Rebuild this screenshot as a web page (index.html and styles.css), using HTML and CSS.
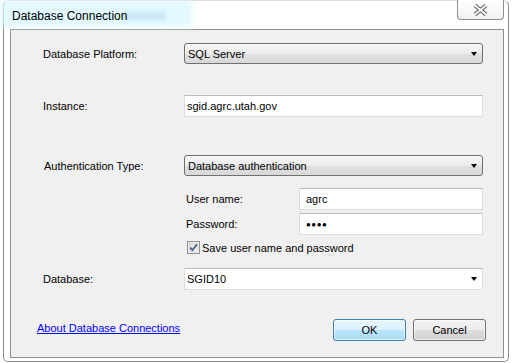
FILE: index.html
```html
<!DOCTYPE html>
<html lang="en">
<head>
  <meta charset="UTF-8" />
  <title>Database Connection</title>
  <link rel="stylesheet" href="styles.css">
</head>
<body>

<div class="window">
  <div class="titlebar">
    <span class="glow"></span>
    <span class="glow-ghost"></span>
    <span class="title">Database Connection</span>
    <button class="close" type="button" aria-label="Close">
      <svg width="15" height="12" viewBox="0 0 15 12">
        <path d="M2 1.5 L13 10.5 M13 1.5 L2 10.5" stroke="#5a5a5a" stroke-width="4" fill="none"/>
        <path d="M2 1.5 L13 10.5 M13 1.5 L2 10.5" stroke="#fff" stroke-width="2" fill="none"/>
      </svg>
    </button>
  </div>

  <div class="client">
    <div class="row platform-row">
      <span class="label">Database Platform:</span>
      <div class="combo">SQL Server<span class="arrow"></span></div>
    </div>

    <div class="row instance-row">
      <span class="label">Instance:</span>
      <div class="field">sgid.agrc.utah.gov</div>
    </div>

    <div class="row auth-row">
      <span class="label">Authentication Type:</span>
      <div class="combo">Database authentication<span class="arrow"></span></div>
    </div>

    <div class="sub-row user-row">
      <span class="sub-label">User name:</span>
      <div class="field sub-field">agrc</div>
    </div>
    <div class="sub-row pass-row">
      <span class="sub-label">Password:</span>
      <div class="field sub-field"><span class="dots">●●●●</span></div>
    </div>

    <div class="check-row">
      <svg class="check" width="13" height="13" viewBox="0 0 13 13">
        <defs>
          <linearGradient id="cb" x1="0" y1="0" x2="1" y2="1">
            <stop offset="0" stop-color="#d8d8d8"/>
            <stop offset="1" stop-color="#fbfbfb"/>
          </linearGradient>
        </defs>
        <rect x="0.5" y="0.5" width="12" height="12" fill="#fff" stroke="#8e8f8f"/>
        <rect x="2" y="2" width="9" height="9" fill="url(#cb)" stroke="#c2c2c2" stroke-width="0.6"/>
        <path d="M3.2 6.6 L5.4 9.2 L10 3.4" stroke="#4a5d8c" stroke-width="1.8" fill="none"/>
      </svg>
      <span>Save user name and password</span>
    </div>

    <div class="row db-row">
      <span class="label">Database:</span>
      <div class="combo editable">SGID10<span class="arrow"></span></div>
    </div>

    <div class="footer">
      <a href="#" class="help-link">About Database Connections</a>
      <div class="buttons">
        <button type="button" class="btn btn-ok">OK</button>
        <button type="button" class="btn">Cancel</button>
      </div>
    </div>
  </div>
</div>

</body>
</html>
```

FILE: styles.css
```css
* { box-sizing: border-box; }
body {
  margin: 0;
  background: #fff;
  font-family: "Liberation Sans", Arial, sans-serif;
  font-size: 11px;
  color: #000;
}

.window {
  margin-left: 3px;
  width: 506px;
  height: 362px;
  border: 1px solid #8c8c8c;
  border-top-color: #dcdcdc;
  border-radius: 6px 6px 5px 5px;
  background: #fff;
}

.titlebar {
  position: relative;
  height: 28px;
  display: flex;
  align-items: center;
  padding-left: 8px;
}
.glow {
  position: absolute;
  left: -4px;
  top: -1px;
  width: 192px;
  height: 27px;
  background: rgba(220, 248, 255, 0.85);
  filter: blur(3px);
}
.glow-ghost {
  position: absolute;
  left: 118px;
  top: 11px;
  width: 44px;
  height: 8px;
  background: rgba(140, 180, 210, 0.25);
  filter: blur(2px);
}
.title {
  position: relative;
  font-size: 12px;
  margin-top: 2px;
  color: #000;
}
.close {
  position: absolute;
  right: 4px;
  top: -1px;
  width: 47px;
  height: 20px;
  border: 1px solid #8f8f8f;
  border-top: none;
  border-radius: 0 0 4px 4px;
  background: linear-gradient(#fff, #f1f1f1);
  padding: 0;
  display: flex;
  align-items: center;
  justify-content: center;
}

.client {
  margin: 0 4px 0 6px;
  height: 329px;
  border: 1px solid #8e8f8f;
  background: #f0f0f0;
  padding: 13px 20px 0 32px;
  display: flex;
  flex-direction: column;
}

.row { display: flex; align-items: center; }
.row .label { width: 141px; }
.instance-row { margin-top: 31px; }
.auth-row { margin-top: 38px; }
.db-row { margin-top: 14px; }
.auth-row .label { margin-left: 1px; width: 140px; }

.combo {
  position: relative;
  flex: 1;
  height: 21px;
  border: 1px solid #707070;
  border-radius: 3px;
  background: linear-gradient(#f6f6f6, #ececec 50%, #e0e0e0 51%, #d8d8d8);
  padding-left: 3px;
  display: flex;
  align-items: center;
}
.combo.editable {
  height: 22px;
  border: 1px solid #dcdde2;
  border-top-color: #b9bbc1;
  border-radius: 0;
  background: #fff;
  padding-left: 2px;
}
.arrow {
  position: absolute;
  right: 5px;
  top: 8px;
  border-left: 3.5px solid transparent;
  border-right: 3.5px solid transparent;
  border-top: 4px solid #000;
}

.field {
  flex: 1;
  height: 22px;
  border: 1px solid #dcdde2;
  border-top-color: #b9bbc1;
  background: #fff;
  padding-left: 2px;
  display: flex;
  align-items: center;
}

.sub-row {
  display: flex;
  align-items: center;
  margin-left: 143px;
}
.user-row { margin-top: 12px; }
.pass-row { margin-top: 3px; }
.sub-label { width: 113px; }
.sub-field { flex: none; width: 184px; padding-left: 6px; }
.dots { font-size: 8px; letter-spacing: 0.5px; }

.check-row {
  display: flex;
  align-items: center;
  margin: 6px 0 0 144px;
  height: 13px;
}
.check-row span { margin-left: 2px; }

.footer {
  margin-top: 29px;
  display: flex;
  align-items: center;
  justify-content: space-between;
  margin-left: -6px;
  margin-right: -3px;
}
.help-link {
  color: #0000ff;
  text-decoration: underline;
  margin-top: -4px;
}
.buttons { display: flex; gap: 7px; }
.btn {
  width: 73px;
  height: 22px;
  border: 1px solid #707070;
  border-radius: 3px;
  background: linear-gradient(#f3f3f3, #ebebeb 50%, #dddddd 51%, #d1d1d1);
  box-shadow: inset 0 0 0 1px rgba(255, 255, 255, 0.7);
  font-family: "Liberation Sans", Arial, sans-serif;
  font-size: 11px;
  color: #000;
  padding: 0;
}
.btn-ok {
  border-color: #3c7fb1;
  background: linear-gradient(#eaf6fd, #d9f0fc 50%, #bee6fd 51%, #a7d9f5);
}
```
